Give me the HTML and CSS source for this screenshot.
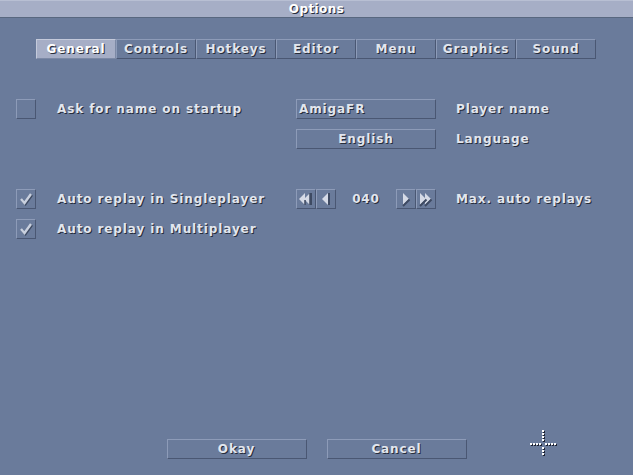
FILE: index.html
```html
<!DOCTYPE html>
<html>
<head>
<meta charset="UTF-8">
<link rel="stylesheet" href="styles.css">
</head>
<body>
<div class="titlebar">Options</div>

<div class="tabs">
  <div class="tab active">General</div>
  <div class="tab">Controls</div>
  <div class="tab">Hotkeys</div>
  <div class="tab">Editor</div>
  <div class="tab">Menu</div>
  <div class="tab">Graphics</div>
  <div class="tab">Sound</div>
</div>

<div class="settings">
  <div class="check"></div>
  <div class="label">Ask for name on startup</div>
  <div class="btn field">AmigaFR</div>
  <div class="label">Player name</div>

  <div></div>
  <div></div>
  <div class="btn">English</div>
  <div class="label">Language</div>

  <div class="spacer"></div>

  <div class="check">
    <svg viewBox="0 0 20 20" width="20" height="20"><path d="M5 10 L8.5 14 L15 5" fill="none" stroke="#3e4a62" stroke-width="2.4" transform="translate(1 1)"/><path d="M5 10 L8.5 14 L15 5" fill="none" stroke="#c9d0de" stroke-width="2.4"/></svg>
  </div>
  <div class="label">Auto replay in Singleplayer</div>
  <div class="stepper">
    <div class="btn arrow">
      <svg viewBox="0 0 18 18" width="18" height="18"><path d="M8 3 L2 9 L8 15 Z M13 3 L7 9 L13 15 Z" fill="#d5dae6"/><path d="M8 15 L8 10 M13 15 L13 3" stroke="#3e4a62" stroke-width="1.5"/><rect x="13" y="3" width="2" height="12" fill="#3e4a62"/></svg>
    </div>
    <div class="btn arrow">
      <svg viewBox="0 0 18 18" width="18" height="18"><path d="M11 3 L5 9 L11 15 Z" fill="#d5dae6"/><rect x="11" y="3" width="2" height="12" fill="#3e4a62"/></svg>
    </div>
    <div class="value">040</div>
    <div class="btn arrow">
      <svg viewBox="0 0 18 18" width="18" height="18"><path d="M6 3 L12 9 L6 15 Z" fill="#d5dae6"/><path d="M12.5 9.5 L6 16" stroke="#3e4a62" stroke-width="2"/></svg>
    </div>
    <div class="btn arrow">
      <svg viewBox="0 0 18 18" width="18" height="18"><path d="M3 3 L9 9 L3 15 Z M8 3 L14 9 L8 15 Z" fill="#d5dae6"/><path d="M9.5 9.5 L3 16 M14.5 9.5 L8 16" stroke="#3e4a62" stroke-width="2"/></svg>
    </div>
  </div>
  <div class="label">Max. auto replays</div>

  <div class="check">
    <svg viewBox="0 0 20 20" width="20" height="20"><path d="M5 10 L8.5 14 L15 5" fill="none" stroke="#3e4a62" stroke-width="2.4" transform="translate(1 1)"/><path d="M5 10 L8.5 14 L15 5" fill="none" stroke="#c9d0de" stroke-width="2.4"/></svg>
  </div>
  <div class="label">Auto replay in Multiplayer</div>
  <div></div>
  <div></div>
</div>

<div class="footer">
  <div class="btn wide">Okay</div>
  <div class="btn wide">Cancel</div>
</div>

<svg class="cursor" viewBox="0 0 30 30" width="30" height="30">
  <g fill="#1c2130" transform="translate(1 1)">
    <rect x="12" y="0" width="2" height="2"/><rect x="12" y="3" width="2" height="2"/><rect x="12" y="6" width="2" height="2"/><rect x="12" y="9" width="2" height="2"/>
    <rect x="12" y="17" width="2" height="2"/><rect x="12" y="20" width="2" height="2"/><rect x="12" y="23" width="2" height="2"/>
    <rect x="0" y="13" width="2" height="2"/><rect x="3" y="13" width="2" height="2"/><rect x="6" y="13" width="2" height="2"/><rect x="9" y="13" width="2" height="2"/>
    <rect x="15" y="13" width="2" height="2"/><rect x="18" y="13" width="2" height="2"/><rect x="21" y="13" width="2" height="2"/><rect x="24" y="13" width="2" height="2"/>
  </g>
  <g fill="#ffffff">
    <rect x="12" y="0" width="2" height="2"/><rect x="12" y="3" width="2" height="2"/><rect x="12" y="6" width="2" height="2"/><rect x="12" y="9" width="2" height="2"/>
    <rect x="12" y="17" width="2" height="2"/><rect x="12" y="20" width="2" height="2"/><rect x="12" y="23" width="2" height="2"/>
    <rect x="0" y="13" width="2" height="2"/><rect x="3" y="13" width="2" height="2"/><rect x="6" y="13" width="2" height="2"/><rect x="9" y="13" width="2" height="2"/>
    <rect x="15" y="13" width="2" height="2"/><rect x="18" y="13" width="2" height="2"/><rect x="21" y="13" width="2" height="2"/><rect x="24" y="13" width="2" height="2"/>
  </g>
</svg>
</body>
</html>
```

FILE: styles.css
```css
:root {
  --bg: #6a7b9b;
  --bar: #a6aec6;
  --light: #8d9bb8;
  --dark: #4a5773;
  --text: #e2e6ee;
  --shadow: #262c3a;
}

* {
  box-sizing: border-box;
  margin: 0;
  padding: 0;
}

body {
  width: 633px;
  height: 475px;
  overflow: hidden;
  position: relative;
  display: flex;
  flex-direction: column;
  background: var(--bg);
  color: var(--text);
  font-family: "DejaVu Sans", sans-serif;
  font-weight: bold;
  font-size: 12px;
  letter-spacing: 0.9px;
  text-shadow: 1px 1px 0 var(--shadow);
}

.titlebar {
  height: 18px;
  line-height: 17px;
  text-align: center;
  background: var(--bar);
  border-top: 1px solid #b8bfd3;
  border-bottom: 1px solid #58677f;
  color: #ffffff;
  letter-spacing: 0.4px;
}

.tabs {
  display: flex;
  margin-top: 21px;
  padding-left: 36px;
}

.tab {
  width: 80px;
  height: 20px;
  line-height: 18px;
  text-align: center;
  border: 1px solid;
  border-color: var(--light) var(--dark) var(--dark) var(--light);
}

.tab.active {
  background: var(--bar);
  border-color: #c4cadb #7c89a5 #7c89a5 #c4cadb;
  color: #ffffff;
}

.settings {
  display: grid;
  grid-template-columns: 41px 239px 160px 1fr;
  grid-auto-rows: 20px;
  row-gap: 10px;
  margin-top: 40px;
  padding-left: 16px;
  align-items: center;
}

.spacer {
  grid-column: 1 / -1;
}

.check {
  width: 20px;
  height: 20px;
  border: 1px solid;
  border-color: var(--light) var(--dark) var(--dark) var(--light);
}

.check svg {
  display: block;
  margin: -1px;
}

.btn {
  height: 20px;
  line-height: 18px;
  text-align: center;
  border: 1px solid;
  border-color: var(--light) var(--dark) var(--dark) var(--light);
}

.settings .btn {
  width: 140px;
}

.btn.field {
  text-align: left;
  padding-left: 2px;
}

.stepper {
  display: flex;
  align-items: center;
}

.settings .btn.arrow {
  width: 20px;
}

.arrow svg {
  display: block;
}

.value {
  width: 60px;
  text-align: center;
}

.footer {
  display: flex;
  justify-content: center;
  gap: 20px;
  margin-top: auto;
  padding-bottom: 16px;
}

.btn.wide {
  width: 140px;
}

.cursor {
  position: absolute;
  left: 530px;
  top: 430px;
}
```
